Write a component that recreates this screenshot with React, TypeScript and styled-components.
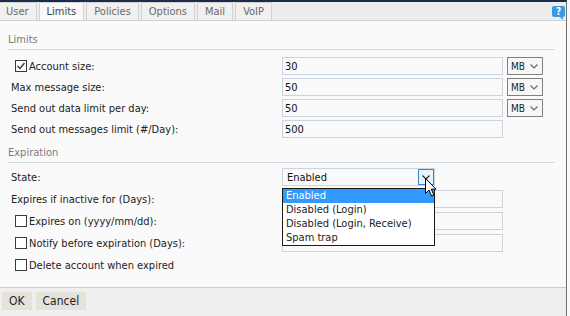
import React from 'react';
import styled, { createGlobalStyle } from 'styled-components';

const GlobalStyle = createGlobalStyle`
  html, body {
    margin: 0;
    padding: 0;
  }
  body {
    font-family: "DejaVu Sans Condensed", "DejaVu Sans", sans-serif;
    font-size: 11px;
    color: #222;
    background: #fafafa;
  }
`;

const Window = styled.div`
  width: 567px;
  height: 316px;
  box-sizing: border-box;
  border-top: 2px solid #1e2c4c;
  border-right: 1px solid #707070;
  display: flex;
  flex-direction: column;
  background: #fafafa;
  overflow: hidden;
`;

const TabBar = styled.div`
  height: 19px;
  box-sizing: border-box;
  display: flex;
  align-items: flex-end;
  background: #ededed;
  border-bottom: 1px solid #cdd2d8;
  padding-right: 1px;
`;

const Tab = styled.div<{ $active?: boolean }>`
  height: 17px;
  line-height: 17px;
  padding: 0 7px;
  margin-right: 2px;
  color: ${(p) => (p.$active ? '#444' : '#6a6a6a')};
  background: ${(p) => (p.$active ? '#f9f9f9' : '#f0f0f0')};
  border: 1px solid #d2d2d2;
  border-bottom: none;
  &:first-child {
    border-left: none;
    padding-left: 6px;
  }
`;

const HelpIcon = styled.span`
  margin-left: auto;
  align-self: center;
  position: relative;
  width: 13px;
  height: 11px;
  border-radius: 2px;
  background: #3a9be0;
  color: #fff;
  font-weight: bold;
  font-size: 10px;
  line-height: 11px;
  text-align: center;
  &::after {
    content: '';
    position: absolute;
    right: 2px;
    bottom: -3px;
    border-left: 3px solid transparent;
    border-top: 3px solid #3a9be0;
  }
`;

const Body = styled.div`
  flex: 1;
  display: flex;
  flex-direction: column;
  padding: 12px 11px 0 8px;
`;

const SectionTitle = styled.div<{ $top?: number; $bottom: number }>`
  color: #7a7a7a;
  line-height: 14px;
  padding-bottom: 2px;
  border-bottom: 1px solid #d3dae2;
  margin-top: ${(p) => p.$top ?? 0}px;
  margin-bottom: ${(p) => p.$bottom}px;
`;

const FieldGrid = styled.div<{ $gap: number }>`
  display: grid;
  grid-template-columns: 270px 221px 36px;
  grid-auto-rows: 18px;
  column-gap: 4px;
  row-gap: ${(p) => p.$gap}px;
`;

const Label = styled.div<{ $indent: number }>`
  grid-column: 1;
  display: flex;
  align-items: center;
  gap: 2px;
  padding-left: ${(p) => p.$indent}px;
  color: #222;
  white-space: nowrap;
`;

const CheckBox = styled.span`
  width: 12px;
  height: 12px;
  box-sizing: border-box;
  border: 1px solid #3a3a3a;
  background: #fff;
  display: flex;
  align-items: center;
  justify-content: center;
`;

const TextBox = styled.div`
  grid-column: 2;
  box-sizing: border-box;
  border: 1px solid #cbd3dc;
  background: #fafafa;
  padding: 0 2px;
  display: flex;
  align-items: center;
  color: #111;
`;

const UnitSelect = styled.div`
  grid-column: 3;
  box-sizing: border-box;
  border: 1px solid #808080;
  background: #f7f7f7;
  display: flex;
  align-items: center;
  justify-content: space-between;
  padding: 0 4px 0 3px;
  font-size: 10px;
  color: #222;
`;

const StateSelect = styled.div`
  grid-column: 2;
  width: 153px;
  box-sizing: border-box;
  position: relative;
  border: 1px solid #cbd3dc;
  background: #fafafa;
  display: flex;
  align-items: center;
  padding-left: 4px;
  color: #111;
`;

const ArrowButton = styled.span`
  margin-left: auto;
  position: relative;
  width: 16px;
  height: 16px;
  box-sizing: border-box;
  border: 1px solid #3d86c6;
  background: #e8f2fb;
  display: flex;
  align-items: center;
  justify-content: center;
`;

const Pointer = styled.svg`
  position: absolute;
  left: 6px;
  top: 8px;
  z-index: 4;
`;

const DropList = styled.div`
  position: absolute;
  top: 19px;
  left: -1px;
  width: 153px;
  box-sizing: border-box;
  border: 1px solid #1a1a1a;
  background: #fff;
  z-index: 3;
`;

const Option = styled.div<{ $selected?: boolean }>`
  height: 14px;
  line-height: 14px;
  padding-left: 3px;
  white-space: nowrap;
  background: ${(p) => (p.$selected ? '#3399ff' : '#fff')};
  color: ${(p) => (p.$selected ? '#fff' : '#222')};
`;

const Footer = styled.div`
  height: 29px;
  box-sizing: border-box;
  border-top: 1px solid #c7ced6;
  background: #efefef;
  display: flex;
  align-items: flex-start;
  gap: 4px;
  padding: 4px 2px 0;
`;

const Button = styled.button`
  height: 18px;
  padding: 0 7px;
  border: none;
  background: #e5e2da;
  color: #222;
  font-family: inherit;
  font-size: 12px;
  line-height: 18px;
`;

const Chevron = ({ color }: { color: string }) => (
  <svg width="8" height="5" viewBox="0 0 8 5">
    <path d="M0.5 0.5 L4 4 L7.5 0.5" fill="none" stroke={color} strokeWidth="1.1" />
  </svg>
);

const Check = ({ checked }: { checked?: boolean }) => (
  <CheckBox>
    {checked && (
      <svg width="10" height="10" viewBox="0 0 10 10">
        <path d="M1.5 5 L4 7.5 L8.5 2" fill="none" stroke="#333" strokeWidth="1.3" />
      </svg>
    )}
  </CheckBox>
);

const tabs = ['User', 'Limits', 'Policies', 'Options', 'Mail', 'VoIP'];
const states = ['Enabled', 'Disabled (Login)', 'Disabled (Login, Receive)', 'Spam trap'];

export default function App() {
  return (
    <>
      <GlobalStyle />
      <Window>
        <TabBar>
          {tabs.map((t) => (
            <Tab key={t} $active={t === 'Limits'}>
              {t}
            </Tab>
          ))}
          <HelpIcon>?</HelpIcon>
        </TabBar>
        <Body>
          <SectionTitle $bottom={7}>Limits</SectionTitle>
          <FieldGrid $gap={3}>
            <Label $indent={7}>
              <Check checked />
              Account size:
            </Label>
            <TextBox>30</TextBox>
            <UnitSelect>
              MB <Chevron color="#666" />
            </UnitSelect>
            <Label $indent={3}>Max message size:</Label>
            <TextBox>50</TextBox>
            <UnitSelect>
              MB <Chevron color="#666" />
            </UnitSelect>
            <Label $indent={3}>Send out data limit per day:</Label>
            <TextBox>50</TextBox>
            <UnitSelect>
              MB <Chevron color="#666" />
            </UnitSelect>
            <Label $indent={3}>Send out messages limit (#/Day):</Label>
            <TextBox>500</TextBox>
          </FieldGrid>

          <SectionTitle $top={8} $bottom={5}>
            Expiration
          </SectionTitle>
          <FieldGrid $gap={4}>
            <Label $indent={3}>State:</Label>
            <StateSelect>
              Enabled
              <ArrowButton>
                <Chevron color="#222" />
                <Pointer width="13" height="20" viewBox="0 0 13 20">
                  <path
                    d="M0.5 0.5 L0.5 15.5 L4 12 L6.5 18 L8.8 17 L6.3 11.2 L11 11.2 Z"
                    fill="#fff"
                    stroke="#000"
                    strokeWidth="1"
                    strokeLinejoin="round"
                  />
                </Pointer>
              </ArrowButton>
              <DropList>
                {states.map((s) => (
                  <Option key={s} $selected={s === 'Enabled'}>
                    {s}
                  </Option>
                ))}
              </DropList>
            </StateSelect>
            <Label $indent={3}>Expires if inactive for (Days):</Label>
            <TextBox />
            <Label $indent={7}>
              <Check />
              Expires on (yyyy/mm/dd):
            </Label>
            <TextBox />
            <Label $indent={7}>
              <Check />
              Notify before expiration (Days):
            </Label>
            <TextBox />
            <Label $indent={7}>
              <Check />
              Delete account when expired
            </Label>
          </FieldGrid>
        </Body>
        <Footer>
          <Button>OK</Button>
          <Button>Cancel</Button>
        </Footer>
      </Window>
    </>
  );
}
